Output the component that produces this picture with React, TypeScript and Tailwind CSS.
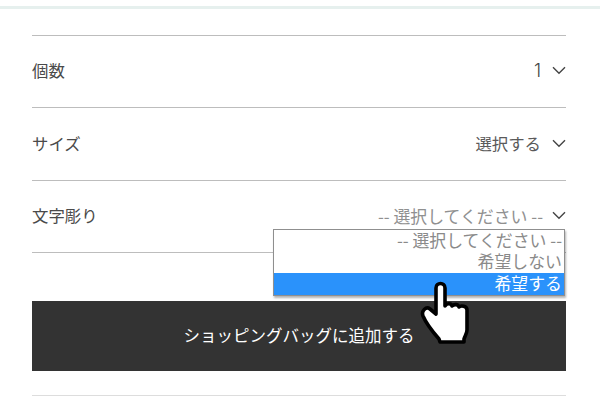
import React from "react";

const Chevron = ({ gap }: { gap: string }) => (
  <svg width="14" height="9" viewBox="0 0 14 9" fill="none" className={`${gap} shrink-0`}>
    <path d="M1 1.2 L7 7.2 L13 1.2" stroke="#444" strokeWidth="1.4" />
  </svg>
);

const Row = ({ label, value, kind }: { label: string; value: string; kind: "latin" | "plain" | "muted" }) => (
  <div className="relative flex h-[72.4px] items-center justify-between border-t border-[#bdbdbd] pb-[2px]">
    <span className="text-[16.4px] font-normal text-[#4a4a4a]">{label}</span>
    <span className="flex items-center">
      {kind === "muted" && <span className="text-[16.9px] font-normal text-[#909090]">{value}</span>}
      {kind === "latin" && <span className="font-['Inter',sans-serif] text-[18px] font-light text-[#444]">{value}</span>}
      {kind === "plain" && <span className="text-[16.4px] font-normal text-[#5a5a5a]">{value}</span>}
      <Chevron gap={kind === "muted" ? "ml-[9px]" : "ml-[11px]"} />
    </span>
  </div>
);

const Hand = () => (
  <svg width="52" height="66" viewBox="0 0 52 66" className="absolute left-[420px] top-[280px]">
    <path
      d="M16 8 C16 2 25 2 25 8 L25 26 C27 23 31 23 32 26 C34 24 38 24 39 27 C41 25 47 26 47 30 L47 50 C47 53 45 56 44 59 L44 62 L20 62 L19 59 C12 51 6 43 3 36 C1 31 6 26 10 29 L16 34 Z"
      fill="#fff"
      stroke="#000"
      strokeWidth="3.6"
      strokeLinejoin="round"
    />
  </svg>
);

export default function App() {
  return (
    <div className="relative h-[400px] w-[600px] overflow-hidden bg-white font-['Noto_Sans_CJK_JP','Noto_Sans',sans-serif]">
      <div className="h-[9px] border-b-[3px] border-[#e6f0ee]" />
      <div className="mx-[32px] mt-[26px] w-[534px]">
        <Row label="個数" value="1" kind="latin" />
        <Row label="サイズ" value="選択する" kind="plain" />
        <Row label="文字彫り" value="-- 選択してください --" kind="muted" />
        <div className="border-t border-[#bdbdbd] pt-[48px]">
          <div className="flex h-[70px] items-center justify-center bg-[#333333] pb-[1px] text-[16.5px] font-normal text-white">
            ショッピングバッグに追加する
          </div>
        </div>
        <div className="mt-[24px] border-t border-[#dddddd]" />
      </div>
      <div className="absolute left-[273px] top-[229px] w-[292px] border border-[#8f8f8f] bg-white text-right text-[16.9px] leading-[21.5px] text-[#8a8a8a] shadow-[1px_2px_2px_rgba(0,0,0,0.3)]">
        <div className="h-[21px] px-[2px] leading-[20px]">-- 選択してください --</div>
        <div className="h-[22px] px-[2px] leading-[20px]">希望しない</div>
        <div className="h-[22px] bg-[#2a92fb] px-[2px] leading-[20px] text-white">希望する</div>
      </div>
      <Hand />
    </div>
  );
}
